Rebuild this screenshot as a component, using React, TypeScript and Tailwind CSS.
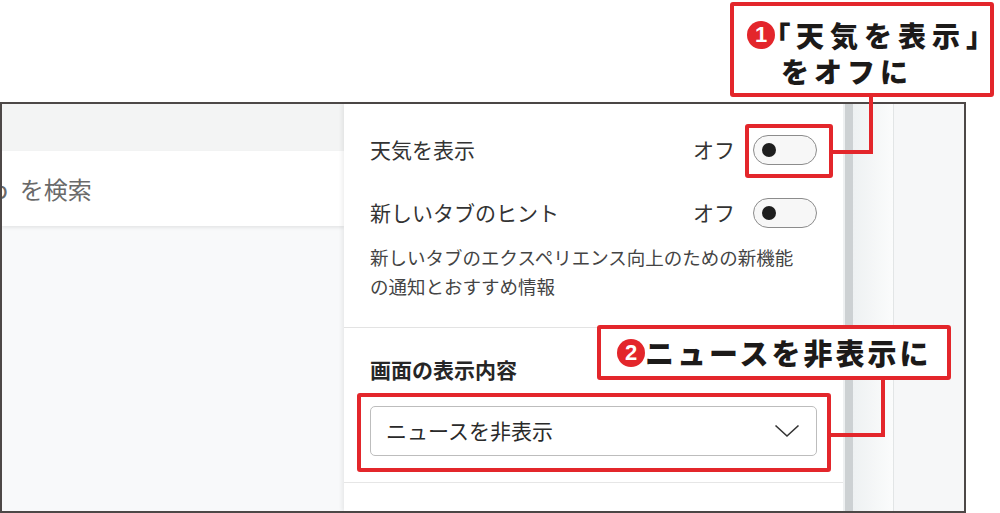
const JP = "font-['Noto_Sans_CJK_JP','Noto_Sans',sans-serif]";

const Toggle = () => (
  <div className="w-[64px] h-[30px] rounded-full border-[1.5px] border-[#8c8c8c] bg-[#f7f7f7] flex items-center pl-[8px]">
    <div className="w-[14px] h-[14px] rounded-full bg-[#1e1e1e]" />
  </div>
);

const Badge = ({ n }: { n: string }) => (
  <div className="w-[28px] h-[28px] rounded-full bg-[#e3262b] text-white flex items-center justify-center text-[22px] font-black leading-none shrink-0 font-['Liberation_Sans',sans-serif]">
    {n}
  </div>
);

export default function App() {
  return (
    <div className={`relative w-[1000px] h-[513px] bg-white overflow-hidden ${JP}`}>
      <div className="pt-[102px]">
        <div className="w-[966px] h-[411px] border-2 border-[#4d4847] flex">
          {/* left page area */}
          <div className="w-[342px] flex flex-col bg-[#f8f9fa] overflow-hidden">
            <div className="h-[47px] bg-[#f3f4f4]" />
            <div className="h-[75px] bg-white shadow-[0_2px_3px_rgba(0,0,0,0.08)] flex items-center text-[24px] text-[#6a6a6a]">
              <span className="-ml-[9px]">b</span>
              <span className="ml-[12px]">を検索</span>
            </div>
          </div>

          {/* settings panel */}
          <div className="w-[499px] bg-white shadow-[-2px_0_4px_rgba(0,0,0,0.07)] flex flex-col pt-[26px]">
            <div className="px-[26px] flex flex-col">
              <div className="h-[40px] flex items-center justify-between">
                <span className="text-[21px] text-[#333]">天気を表示</span>
                <div className="flex items-center gap-[18px]">
                  <span className="text-[21px] text-[#333]">オフ</span>
                  <Toggle />
                </div>
              </div>
              <div className="mt-[23px] h-[40px] flex items-center justify-between">
                <span className="text-[21px] text-[#333]">新しいタブのヒント</span>
                <div className="flex items-center gap-[18px]">
                  <span className="text-[21px] text-[#333]">オフ</span>
                  <Toggle />
                </div>
              </div>
              <p className="mt-[10px] text-[18.5px] leading-[29px] text-[#444]">
                新しいタブのエクスペリエンス向上のための新機能
                <br />
                の通知とおすすめ情報
              </p>
            </div>
            <div className="mt-[26px] h-px bg-[#e3e3e3]" />
            <div className="px-[26px] flex flex-col">
              <h3 className="mt-[27px] text-[21px] leading-[28px] font-bold text-[#262626]">画面の表示内容</h3>
              <div className="mt-[23px] h-[50px] rounded-[5px] border border-[#bdbdbd] bg-white flex items-center justify-between pl-[15px] pr-[16px]">
                <span className="text-[21px] text-[#2a2a2a]">ニュースを非表示</span>
                <svg width="26" height="14" viewBox="0 0 26 14" fill="none">
                  <path d="M1.5 1.5 L13 12 L24.5 1.5" stroke="#333" strokeWidth="1.6" />
                </svg>
              </div>
            </div>
            <div className="mt-[26px] h-px bg-[#e6e6e6]" />
          </div>

          {/* scrollbar strip */}
          <div className="w-[10px] flex">
            <div className="w-[2px] bg-[#eef0f1]" />
            <div className="flex-1 bg-[#cdd1d3]" />
          </div>

          {/* right page area */}
          <div className="flex-1 flex">
            <div className="w-[41px] bg-gradient-to-r from-[#eef1f2] to-[#fbfcfc] border-r border-[#e2e5e6]" />
            <div className="flex-1 bg-[#f6f7f8]" />
          </div>
        </div>
      </div>

      {/* callout 1 */}
      <div className="absolute z-20 left-[730px] top-[2px] w-[264px] h-[95px] border-4 border-[#e3262b] rounded-[3px] bg-white flex flex-col pt-[11px] text-[#1c1a19] font-black">
        <div className="h-[36px] flex items-center pl-[13px]">
          <Badge n="1" />
          <span className="ml-[1px] text-[28px] leading-none whitespace-nowrap [font-feature-settings:'palt']">「</span>
          <span className="ml-[6px] text-[28px] tracking-[6px] leading-none whitespace-nowrap">天気を表示」</span>
        </div>
        <div className="h-[36px] flex items-center pl-[47px]">
          <span className="text-[28px] tracking-[5px] leading-none whitespace-nowrap">をオフに</span>
        </div>
      </div>
      <div className="absolute z-20 left-[869px] top-[96px] w-[4px] h-[58px] bg-[#e3262b]" />
      <div className="absolute z-20 left-[831px] top-[150px] w-[42px] h-[4px] bg-[#e3262b]" />
      <div className="absolute z-20 left-[745px] top-[124px] w-[88px] h-[54px] border-4 border-[#e3262b] rounded-[3px]" />

      {/* callout 2 */}
      <div className="absolute z-20 left-[597px] top-[325px] w-[354px] h-[55px] border-4 border-[#e3262b] rounded-[3px] bg-white flex items-center pl-[16px] text-[#1c1a19] font-black">
        <Badge n="2" />
        <span className="text-[29px] tracking-[3px] leading-none whitespace-nowrap">ニュースを非表示に</span>
      </div>
      <div className="absolute z-20 left-[881px] top-[379px] w-[4px] h-[58px] bg-[#e3262b]" />
      <div className="absolute z-20 left-[829px] top-[433px] w-[56px] h-[4px] bg-[#e3262b]" />
      <div className="absolute z-20 left-[357px] top-[393px] w-[474px] h-[79px] border-4 border-[#e3262b] rounded-[3px]" />
    </div>
  );
}
